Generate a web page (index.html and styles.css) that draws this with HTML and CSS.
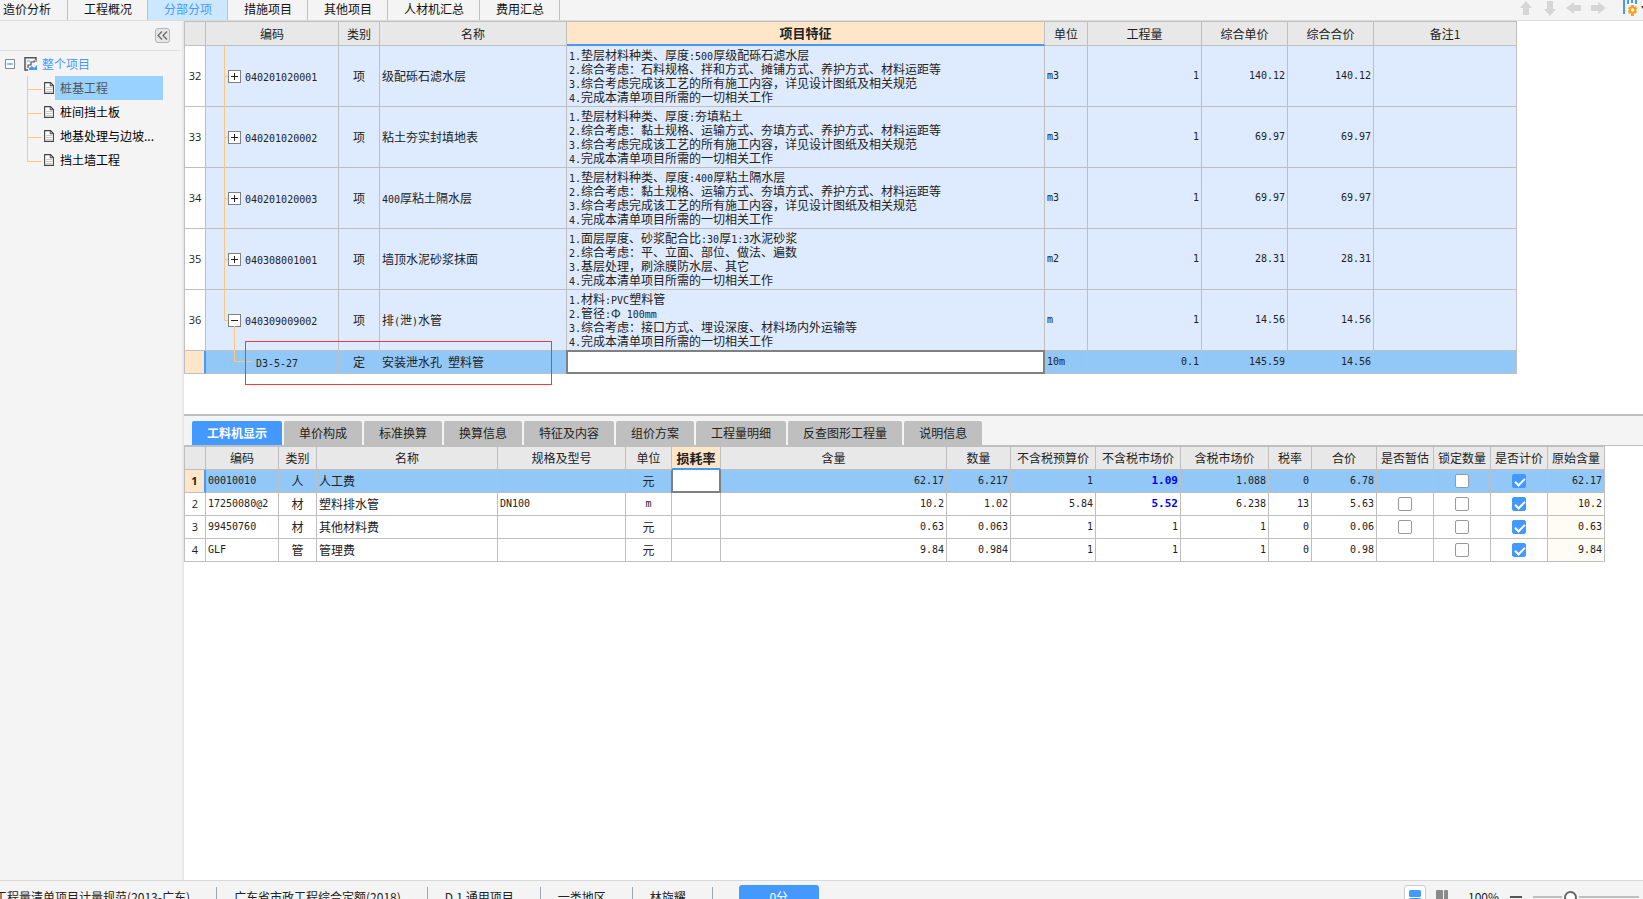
FILE: index.html
```html
<!DOCTYPE html>
<html lang="zh-CN">
<head>
<meta charset="utf-8">
<title>分部分项</title>
<link rel="stylesheet" href="styles.css">
</head>
<body>
<div class="app">
  <header class="topbar">
    <nav class="tabs">
      <button class="tab first">造价分析</button>
      <button class="tab">工程概况</button>
      <button class="tab active">分部分项</button>
      <button class="tab">措施项目</button>
      <button class="tab">其他项目</button>
      <button class="tab">人材机汇总</button>
      <button class="tab">费用汇总</button>
    </nav>
    <div class="tools">
      <button class="tool" aria-label="上移"><svg width="16" height="16" viewBox="0 0 16 16"><path d="M8 1 14 8H11V15H5V8H2Z" fill="#d6d6d6"/></svg></button>
      <button class="tool" aria-label="下移"><svg width="16" height="16" viewBox="0 0 16 16"><path d="M8 16 14 9H11V1H5V9H2Z" fill="#d6d6d6"/></svg></button>
      <button class="tool" aria-label="左移"><svg width="16" height="16" viewBox="0 0 16 16"><path d="M0 8 8 2V5H15V11H8V14Z" fill="#d6d6d6"/></svg></button>
      <button class="tool" aria-label="右移"><svg width="16" height="16" viewBox="0 0 16 16"><path d="M16 8 8 2V5H1V11H8V14Z" fill="#d6d6d6"/></svg></button>
      <button class="tool settings" aria-label="设置"><svg width="22" height="18" viewBox="0 0 22 18"><path d="M0 0H2V14H0ZM4 0H6V4H4ZM8 0H10V3H8ZM12 0H14V4H12Z" fill="#4499ff"/><path d="M8 5h3v2l2-1 1 3-1 1 1 2-2 2-1-1v3H8v-3l-2 1-1-3 1-1-1-2 2-2 1 1Z" fill="#ff9f1c"/><circle cx="9.500" cy="10" r="1.700" fill="#fff"/><path d="M18 6H22L20 9Z" fill="#444"/></svg></button>
    </div>
  </header>

  <div class="body">
    <aside class="sidebar">
      <div class="side-head">
        <button class="collapse" aria-label="收起"><svg width="11" height="9" viewBox="0 0 11 9"><path d="M5 0.500 1 4.500 5 8.500M10 0.500 6 4.500 10 8.500" fill="none" stroke="#666" stroke-width="1.200"/></svg></button>
      </div>
      <div class="tree">
        <div class="root">
          <svg width="10" height="10" viewBox="0 0 10 10"><path d="M.5.5H9.500V9.500H.5Z" fill="#fff" stroke="#888"/><path d="M2 5H8" stroke="#3a9ad9" stroke-width="1.200"/></svg>
          <svg class="root-icon" width="14" height="14" viewBox="0 0 14 14"><path d="M12 3V.8H1V13H4" fill="none" stroke="#555" stroke-width="1.500"/><path d="M4 11V8H7V5H10V4H13" fill="none" stroke="#555" stroke-width="1.200"/><path d="M3 3H6V5H3Z" fill="#9bd0ff"/><path d="M5 13V11L8 9 10 11 13 8V13Z" fill="#4499ff"/></svg>
          <a class="root-label" href="#">整个项目</a>
        </div>
        <ul class="leaves">
          <li><svg width="10" height="12" viewBox="0 0 10 12"><path d="M.6.6H6.500L9.400 3.500V11.400H.6Z" fill="#fff" stroke="#444" stroke-width="1.100"/><path d="M6.300.6V3.700H9.400" fill="none" stroke="#444"/><path d="M2 5.500H8M2 7.500H8M2 9.500H8" stroke="#ccc"/></svg><a class="on" href="#">桩基工程</a></li>
          <li><svg width="10" height="12" viewBox="0 0 10 12"><path d="M.6.6H6.500L9.400 3.500V11.400H.6Z" fill="#fff" stroke="#444" stroke-width="1.100"/><path d="M6.300.6V3.700H9.400" fill="none" stroke="#444"/><path d="M2 5.500H8M2 7.500H8M2 9.500H8" stroke="#ccc"/></svg><a href="#">桩间挡土板</a></li>
          <li><svg width="10" height="12" viewBox="0 0 10 12"><path d="M.6.6H6.500L9.400 3.500V11.400H.6Z" fill="#fff" stroke="#444" stroke-width="1.100"/><path d="M6.300.6V3.700H9.400" fill="none" stroke="#444"/><path d="M2 5.500H8M2 7.500H8M2 9.500H8" stroke="#ccc"/></svg><a href="#">地基处理与边坡...</a></li>
          <li><svg width="10" height="12" viewBox="0 0 10 12"><path d="M.6.6H6.500L9.400 3.500V11.400H.6Z" fill="#fff" stroke="#444" stroke-width="1.100"/><path d="M6.300.6V3.700H9.400" fill="none" stroke="#444"/><path d="M2 5.500H8M2 7.500H8M2 9.500H8" stroke="#ccc"/></svg><a href="#">挡土墙工程</a></li>
        </ul>
      </div>
    </aside>

    <main class="main">
      <section class="pane">
        <table class="grid bill">
          <colgroup><col class="w21"><col class="w133"><col class="w41"><col class="w187"><col class="w478"><col class="w43"><col class="w114"><col class="w86"><col class="w86"><col class="w143"></colgroup>
          <thead>
            <tr><th></th><th>编码</th><th>类别</th><th>名称</th><th class="cur">项目特征</th><th>单位</th><th>工程量</th><th>综合单价</th><th>综合合价</th><th>备注1</th></tr>
          </thead>
          <tbody>
            <tr><td class="no">32</td><td class="code"><button class="exp plus" aria-label="展开"></button><span class="m">040201020001</span></td><td class="c">项</td><td>级配砾石滤水层</td>
              <td class="feat"><span class="m">1.</span>垫层材料种类、厚度<span class="m">:500</span>厚级配砾石滤水层<br><span class="m">2.</span>综合考虑：石料规格、拌和方式、摊铺方式、养护方式、材料运距等<br><span class="m">3.</span>综合考虑完成该工艺的所有施工内容，详见设计图纸及相关规范<br><span class="m">4.</span>完成本清单项目所需的一切相关工作</td>
              <td class="m">m3</td><td class="n">1</td><td class="n">140.12</td><td class="n">140.12</td><td></td></tr>
            <tr><td class="no">33</td><td class="code"><button class="exp plus" aria-label="展开"></button><span class="m">040201020002</span></td><td class="c">项</td><td>粘土夯实封填地表</td>
              <td class="feat"><span class="m">1.</span>垫层材料种类、厚度<span class="m">:</span>夯填粘土<br><span class="m">2.</span>综合考虑：黏土规格、运输方式、夯填方式、养护方式、材料运距等<br><span class="m">3.</span>综合考虑完成该工艺的所有施工内容，详见设计图纸及相关规范<br><span class="m">4.</span>完成本清单项目所需的一切相关工作</td>
              <td class="m">m3</td><td class="n">1</td><td class="n">69.97</td><td class="n">69.97</td><td></td></tr>
            <tr><td class="no">34</td><td class="code"><button class="exp plus" aria-label="展开"></button><span class="m">040201020003</span></td><td class="c">项</td><td><span class="m">400</span>厚粘土隔水层</td>
              <td class="feat"><span class="m">1.</span>垫层材料种类、厚度<span class="m">:400</span>厚粘土隔水层<br><span class="m">2.</span>综合考虑：黏土规格、运输方式、夯填方式、养护方式、材料运距等<br><span class="m">3.</span>综合考虑完成该工艺的所有施工内容，详见设计图纸及相关规范<br><span class="m">4.</span>完成本清单项目所需的一切相关工作</td>
              <td class="m">m3</td><td class="n">1</td><td class="n">69.97</td><td class="n">69.97</td><td></td></tr>
            <tr><td class="no">35</td><td class="code"><button class="exp plus" aria-label="展开"></button><span class="m">040308001001</span></td><td class="c">项</td><td>墙顶水泥砂浆抹面</td>
              <td class="feat"><span class="m">1.</span>面层厚度、砂浆配合比<span class="m">:30</span>厚<span class="m">1:3</span>水泥砂浆<br><span class="m">2.</span>综合考虑：平、立面、部位、做法、遍数<br><span class="m">3.</span>基层处理，刷涂膜防水层、其它<br><span class="m">4.</span>完成本清单项目所需的一切相关工作</td>
              <td class="m">m2</td><td class="n">1</td><td class="n">28.31</td><td class="n">28.31</td><td></td></tr>
            <tr><td class="no">36</td><td class="code end"><button class="exp" aria-label="收起"></button><span class="m">040309009002</span></td><td class="c">项</td><td>排<span class="m">(</span>泄<span class="m">)</span>水管</td>
              <td class="feat"><span class="m">1.</span>材料<span class="m">:PVC</span>塑料管<br><span class="m">2.</span>管径<span class="m">:</span>Φ<span class="m"> 100mm</span><br><span class="m">3.</span>综合考虑：接口方式、埋设深度、材料场内外运输等<br><span class="m">4.</span>完成本清单项目所需的一切相关工作</td>
              <td class="m">m</td><td class="n">1</td><td class="n">14.56</td><td class="n">14.56</td><td></td></tr>
            <tr class="sel"><td class="no"></td><td class="code child"><span class="m">D3-5-27</span></td><td class="c">定</td><td>安装泄水孔<span class="m"> </span>塑料管</td><td class="edit"><input type="text" aria-label="项目特征"></td><td class="m">10m</td><td class="n">0.1</td><td class="n">145.59</td><td class="n">14.56</td><td></td></tr>
          </tbody>
        </table>
        <div class="mark"></div>
      </section>

      <section class="detail">
        <nav class="subtabs">
          <button class="subtab active">工料机显示</button>
          <button class="subtab">单价构成</button>
          <button class="subtab">标准换算</button>
          <button class="subtab">换算信息</button>
          <button class="subtab">特征及内容</button>
          <button class="subtab">组价方案</button>
          <button class="subtab">工程量明细</button>
          <button class="subtab">反查图形工程量</button>
          <button class="subtab">说明信息</button>
        </nav>
        <table class="grid res">
          <colgroup><col class="w21"><col class="w73"><col class="w38"><col class="w181"><col class="w128"><col class="w46"><col class="w49"><col class="w226"><col class="w64"><col class="w85"><col class="w85"><col class="w88"><col class="w43"><col class="w65"><col class="w57"><col class="w57"><col class="w57"><col class="w57"></colgroup>
          <thead>
            <tr><th></th><th>编码</th><th>类别</th><th>名称</th><th>规格及型号</th><th>单位</th><th class="cur">损耗率</th><th>含量</th><th>数量</th><th>不含税预算价</th><th>不含税市场价</th><th>含税市场价</th><th>税率</th><th>合价</th><th>是否暂估</th><th>锁定数量</th><th>是否计价</th><th>原始含量</th></tr>
          </thead>
          <tbody>
            <tr class="sel"><td class="no">1</td><td class="m">00010010</td><td class="c">人</td><td>人工费</td><td></td><td class="c">元</td><td class="edit"><input type="text" aria-label="损耗率"></td><td class="n">62.17</td><td class="n">6.217</td><td class="n">1</td><td class="n hot">1.09</td><td class="n">1.088</td><td class="n">0</td><td class="n">6.78</td><td></td><td class="c"><input type="checkbox" aria-label="锁定数量"></td><td class="c"><input type="checkbox" checked aria-label="是否计价"></td><td class="n orig">62.17</td></tr>
            <tr><td class="no">2</td><td class="m">17250080@2</td><td class="c">材</td><td>塑料排水管</td><td class="m">DN100</td><td class="c m">m</td><td></td><td class="n">10.2</td><td class="n">1.02</td><td class="n">5.84</td><td class="n hot">5.52</td><td class="n">6.238</td><td class="n">13</td><td class="n">5.63</td><td class="c"><input type="checkbox" aria-label="是否暂估"></td><td class="c"><input type="checkbox" aria-label="锁定数量"></td><td class="c"><input type="checkbox" checked aria-label="是否计价"></td><td class="n orig">10.2</td></tr>
            <tr><td class="no">3</td><td class="m">99450760</td><td class="c">材</td><td>其他材料费</td><td></td><td class="c">元</td><td></td><td class="n">0.63</td><td class="n">0.063</td><td class="n">1</td><td class="n">1</td><td class="n">1</td><td class="n">0</td><td class="n">0.06</td><td class="c"><input type="checkbox" aria-label="是否暂估"></td><td class="c"><input type="checkbox" aria-label="锁定数量"></td><td class="c"><input type="checkbox" checked aria-label="是否计价"></td><td class="n orig">0.63</td></tr>
            <tr><td class="no">4</td><td class="m">GLF</td><td class="c">管</td><td>管理费</td><td></td><td class="c">元</td><td></td><td class="n">9.84</td><td class="n">0.984</td><td class="n">1</td><td class="n">1</td><td class="n">1</td><td class="n">0</td><td class="n">0.98</td><td></td><td class="c"><input type="checkbox" aria-label="锁定数量"></td><td class="c"><input type="checkbox" checked aria-label="是否计价"></td><td class="n orig">9.84</td></tr>
          </tbody>
        </table>
      </section>
    </main>
  </div>

  <footer class="status">
    <div class="status-row">
      <span class="info lead">工程量清单项目计量规范(2013-广东)</span>
      <span class="info">广东省市政工程综合定额(2018)</span>
      <span class="info">D.1 通用项目</span>
      <span class="info">一类地区</span>
      <span class="info">林旋耀</span>
      <button class="score">0分</button>
      <div class="view">
        <button class="mode on" aria-label="上下布局"><svg width="12" height="14" viewBox="0 0 12 14"><rect width="12" height="7" rx="1.500" fill="#4499ff"/><rect y="8" width="12" height="6" rx="1.500" fill="#4499ff"/></svg></button>
        <button class="mode" aria-label="左右布局"><svg width="12" height="14" viewBox="0 0 12 14"><rect width="7" height="14" rx="1" fill="#8a8a8a"/><rect x="8" width="4" height="14" rx="1" fill="#8a8a8a"/></svg></button>
        <span class="pct">100%</span>
        <button class="minus" aria-label="缩小"><svg width="12" height="2" viewBox="0 0 12 2"><path d="M0 1H12" stroke="#555" stroke-width="2"/></svg></button>
        <input class="zoom" type="range" min="0" max="300" value="100" aria-label="缩放">
      </div>
    </div>
  </footer>
</div>
</body>
</html>
```

FILE: styles.css
```css
* { box-sizing: border-box; }

body {
  margin: 0;
  font: 12px/14px "Noto Sans CJK SC", sans-serif;
  color: #222;
  background: #fff;
}

button {
  font: inherit;
  color: inherit;
  border: 0;
  padding: 0;
  background: none;
}

a { color: inherit; text-decoration: none; }
svg { display: block; flex: none; }

.app {
  display: flex;
  flex-direction: column;
  height: 100vh;
  overflow: hidden;
}

/* top tab strip */
.topbar {
  display: flex;
  flex: none;
  justify-content: space-between;
  height: 21px;
  background: #f4f4f4;
  border-bottom: 1px solid #dcdcdc;
  overflow: hidden;
}
.tabs { display: flex; }
.tab {
  padding: 0 15px 3px 16px;
  border-right: 1px solid #bfbfbf;
  color: #111;
  white-space: nowrap;
}
.tab.first { padding: 0 16px 3px 3px; }
.tab.active { background: #cce8ff; color: #4499ff; }
.tools {
  display: flex;
  gap: 8px;
  align-items: flex-start;
}
.tool { overflow: hidden; height: 16px; }
.tool svg { margin-top: -1px; }
.tool.settings { margin-left: 9px; width: 20px; height: 18px; }

/* project tree */
.body { display: flex; flex: 1; min-height: 0; }
.sidebar {
  flex: 0 0 184px;
  background: #f4f4f4;
  border-right: 2px solid #e9e9e9;
}
.side-head {
  display: flex;
  justify-content: flex-end;
  width: 180px;
  height: 30px;
  padding: 7px 10px 0 0;
  border-bottom: 1px solid #e0e0e0;
}
.collapse {
  display: flex;
  align-items: center;
  justify-content: center;
  width: 15px;
  height: 15px;
  border: 1px solid #b5b5b5;
  border-radius: 3px;
  background: #e6e6e6;
}
.tree { padding-top: 1px; }
.root {
  display: flex;
  align-items: center;
  height: 24px;
  padding-left: 5px;
}
.root-icon { margin: 0 4px 0 9px; }
.root-label { color: #4499ff; }
.leaves {
  list-style: none;
  margin: 0 0 0 27px;
  padding: 0;
}
.leaves li {
  position: relative;
  display: flex;
  align-items: center;
  height: 24px;
  padding-left: 17px;
}
.leaves li::before {
  content: "";
  position: absolute;
  left: 0;
  top: 0;
  width: 13px;
  height: 13px;
  border: solid #ffc77d;
  border-width: 0 0 1px 1px;
}
.leaves li:not(:last-child)::after {
  content: "";
  position: absolute;
  left: 0;
  top: 12px;
  bottom: 0;
  border-left: 1px solid #ffc77d;
}
.leaves a {
  width: 108px;
  margin-left: 1px;
  padding-left: 5px;
  line-height: 24px;
  color: #000;
}
.leaves a.on { background: #99d1ff; color: #555; }

/* work area */
.main {
  display: flex;
  flex: 1;
  flex-direction: column;
  min-width: 0;
}
.pane { position: relative; flex: 0 0 393px; }

.grid {
  width: 1px;
  table-layout: fixed;
  border-spacing: 0;
  border-left: 1px solid #bfbfbf;
}
.grid th, .grid td {
  height: 23px;
  padding: 0 2px;
  border: solid #bfbfbf;
  border-width: 0 1px 1px 0;
  text-align: left;
  white-space: nowrap;
}
.grid th {
  padding: 0;
  background: #e8e8e8;
  font-weight: 400;
  text-align: center;
}
.grid th.cur {
  background: #ffe6c8;
  border-bottom: 2px solid #4499ff;
  font-size: 13px;
  font-weight: 700;
}
.bill { border-top: 1px solid #bfbfbf; }
.bill th { height: 24px; }
.bill td { height: 61px; background: #deebff; }
.bill .sel td { height: 23px; }
.grid .no {
  padding: 0;
  background: #fff;
  font-family: "Open Sans", sans-serif;
  font-size: 11px;
  text-align: center;
}
.grid .sel td { background: #91c8f8; }
.grid .sel .no {
  background: #ffe6c8;
  border-right: 2px solid #4499ff;
  font-weight: 700;
}
.grid .c { text-align: center; }
.m, .n { font-family: "DejaVu Sans Mono", monospace; font-size: 10px; }
span.m { white-space: pre; line-height: 10px; }
.grid .n { text-align: right; }
.grid .hot { color: #0000f0; font-size: 11px; font-weight: 700; }
.res tr:not(.sel) .orig { background: #fffcf6; }

/* column widths */
.w21 { width: 21px; }
.w38 { width: 38px; }
.w41 { width: 41px; }
.w43 { width: 43px; }
.w46 { width: 46px; }
.w49 { width: 49px; }
.w57 { width: 57px; }
.w64 { width: 64px; }
.w65 { width: 65px; }
.w73 { width: 73px; }
.w85 { width: 85px; }
.w86 { width: 86px; }
.w88 { width: 88px; }
.w114 { width: 114px; }
.w128 { width: 128px; }
.w133 { width: 133px; }
.w143 { width: 143px; }
.w181 { width: 181px; }
.w187 { width: 187px; }
.w226 { width: 226px; }
.w478 { width: 478px; }

/* tree lines inside the code column */
.bill .code { position: relative; padding-left: 39px; }
.bill .child { padding-left: 50px; }
.code::before, .end::after, .child::before {
  content: "";
  position: absolute;
  left: 18px;
  top: 0;
  bottom: -1px;
  width: 4px;
  border-left: 1px solid #ffc77d;
  background: linear-gradient(#ffc77d, #ffc77d) 0 30px / 4px 1px no-repeat;
}
.end::before { bottom: 29px; }
.end::after { left: 28px; top: 36px; width: 1px; background: none; }
.child::before {
  left: 28px;
  bottom: 11px;
  width: 17px;
  border-bottom: 1px solid #ffc77d;
  background: none;
}
.exp {
  position: absolute;
  left: 22px;
  top: 24px;
  width: 13px;
  height: 13px;
  border: 1px solid #808080;
  background: linear-gradient(#222, #222) center / 7px 1px no-repeat #fff;
}
.exp.plus {
  background:
    linear-gradient(#222, #222) center / 7px 1px no-repeat,
    linear-gradient(#222, #222) center / 1px 7px no-repeat #fff;
}

.edit { position: relative; }
.edit input {
  position: absolute;
  inset: -1px;
  width: calc(100% + 2px);
  height: calc(100% + 2px);
  border: 2px solid #808080;
  background: #fff;
  font: inherit;
}
.res .edit input { top: 0; height: calc(100% + 1px); border-top: 0; }

.mark {
  position: absolute;
  left: 61px;
  top: 320px;
  width: 307px;
  height: 44px;
  border: 1px solid #f33b3b;
}

input[type="checkbox"] {
  appearance: none;
  display: block;
  position: relative;
  width: 14px;
  height: 14px;
  margin: 0 auto;
  border: 1px solid #999;
  border-radius: 2px;
  background: #fff;
}
input[type="checkbox"]:checked { border-color: #4499ff; background: #4499ff; }
input[type="checkbox"]:checked::after {
  content: "";
  position: absolute;
  left: 4px;
  top: 1px;
  width: 4px;
  height: 8px;
  border: solid #fff;
  border-width: 0 2px 2px 0;
  transform: rotate(45deg);
}

/* detail tabs */
.detail { border-top: 2px solid #bfbfbf; }
.subtabs {
  display: flex;
  gap: 2px;
  padding: 5px 8px 0;
  background: #f4f4f4;
  border-bottom: 1px solid #bfbfbf;
}
.subtab {
  height: 24px;
  padding: 0 15px;
  border-radius: 2px 2px 0 0;
  background: #bfbfbf;
  white-space: nowrap;
}
.subtab.active { background: #4499ff; color: #fff; font-weight: 700; }
.res th { height: 24px; border-top: 1px solid #bfbfbf; }

/* status bar */
.status {
  flex: 0 0 19px;
  background: #f4f4f4;
  border-top: 1px solid #d8d8d8;
  overflow: hidden;
}
.status-row { display: flex; align-items: center; height: 32px; }
.info {
  padding: 0 26px 0 17px;
  line-height: 20px;
  border-right: 1px solid #a0a6b4;
  white-space: nowrap;
}
.lead {
  display: flex;
  flex: 0 0 217px;
  min-width: 0;
  justify-content: flex-end;
  padding-left: 0;
}
.score {
  width: 80px;
  height: 24px;
  margin-left: 26px;
  border-radius: 3px;
  background: #4499ff;
  color: #fff;
}
.view {
  display: flex;
  align-items: center;
  margin-left: auto;
  padding-right: 4px;
}
.mode {
  display: flex;
  align-items: center;
  justify-content: center;
  width: 22px;
  height: 24px;
  border: 1px solid transparent;
  border-radius: 3px;
}
.mode + .mode { margin-left: 5px; }
.mode.on { border-color: #ccc; background: #fff; }
.pct { width: 32px; margin: 0 10px 0 15px; }
.minus { margin-right: 11px; }
.zoom {
  appearance: none;
  width: 106px;
  height: 14px;
  margin: 0;
  background: linear-gradient(#bfbfbf, #bfbfbf) center / 100% 2px no-repeat;
}
.zoom::-webkit-slider-thumb {
  appearance: none;
  width: 13px;
  height: 13px;
  border: 2px solid #666;
  border-radius: 50%;
  background: #fff;
  box-shadow: 0 0 0 2px #f4f4f4;
}
```
